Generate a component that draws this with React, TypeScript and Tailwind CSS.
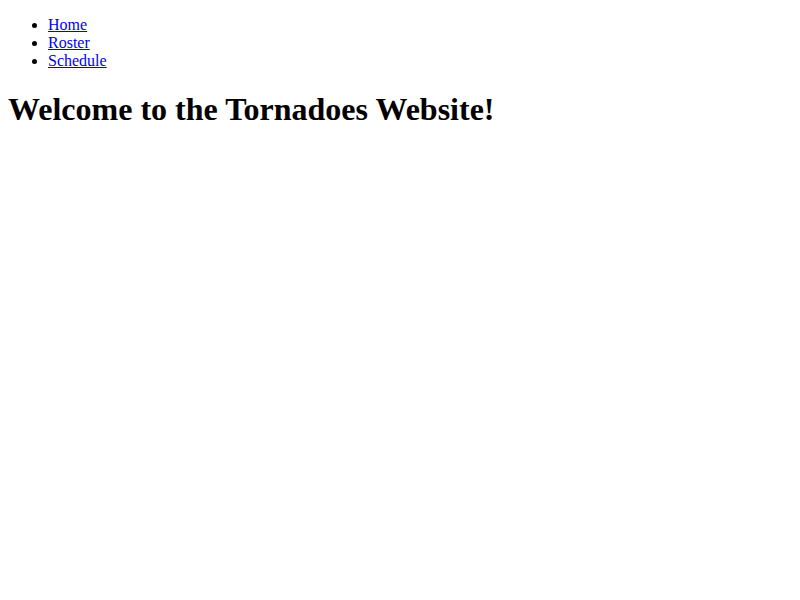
export default function App() {
  return (
    <div className="p-2 font-['Liberation_Serif',serif] text-base leading-[normal] text-black bg-white">
      <nav>
        <ul className="mt-2 mb-4 pl-10 list-disc">
          <li>
            <a href="#" className="text-[#0000ee] underline">Home</a>
          </li>
          <li>
            <a href="#" className="text-[#0000ee] underline">Roster</a>
          </li>
          <li>
            <a href="#" className="text-[#0000ee] underline">Schedule</a>
          </li>
        </ul>
      </nav>
      <h1 className="text-[32px] font-bold my-[21.44px]">Welcome to the Tornadoes Website!</h1>
    </div>
  );
}
